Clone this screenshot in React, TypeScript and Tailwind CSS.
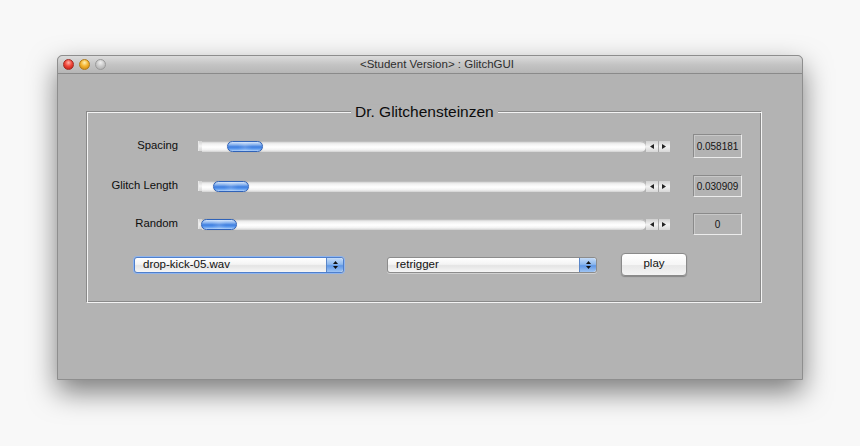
import React from "react";

const font = { fontFamily: '"Liberation Sans", Arial, sans-serif' };

function Slider({ offset }: { offset: number }) {
  return (
    <div className="flex items-center h-[12px] w-[472px]">
      <div className="w-[4px] h-[10px] bg-gradient-to-b from-[#cfcfcf] via-[#f4f4f4] to-[#d8d8d8] border-l border-[#e8e8e8]" />
      <div className="relative flex-1 h-[11px] rounded-r-full rounded-l-[5px] bg-[linear-gradient(#c4c4c4,#f0f0f0_25%,#ffffff_55%,#f2f2f2_80%,#d0d0d0)] shadow-[inset_0_1px_0_#bdbdbd]">
        <div
          className="absolute top-[0px] h-[11px] w-[36px] rounded-full border border-[#2f62b8] bg-[linear-gradient(#d6e6fb,#8ab4ef_30%,#3d7ee0_55%,#5f9cf0_78%,#b3d1f7)] shadow-[0_0_1px_rgba(0,0,0,0.3)]"
          style={{ left: offset }}
        >
          <div className="mx-[10px] h-full bg-[linear-gradient(90deg,transparent,rgba(255,255,255,0.15)_50%,transparent)]" />
        </div>
      </div>
      <div className="flex h-[11px] w-[24px] bg-[linear-gradient(#d0d0d0,#f2f2f2_50%,#d6d6d6)]">
        <div className="flex-1 flex items-center justify-center border-r border-[#a8a8a8]">
          <svg width="4" height="5" viewBox="0 0 4 5"><path d="M4 0 L0 2.5 L4 5 Z" fill="#222" /></svg>
        </div>
        <div className="flex-1 flex items-center justify-center">
          <svg width="4" height="5" viewBox="0 0 4 5"><path d="M0 0 L4 2.5 L0 5 Z" fill="#222" /></svg>
        </div>
      </div>
    </div>
  );
}

function ValueBox({ value, h }: { value: string; h: number }) {
  return (
    <div
      className="w-[49px] flex items-center justify-center border border-t-[#8a8a8a] border-l-[#8a8a8a] border-b-[#ececec] border-r-[#ececec] text-[10px] text-[#151515] shadow-[inset_1px_1px_0_#c8c8c8]"
      style={{ height: h }}
    >
      {value}
    </div>
  );
}

function Row({ label, offset, value, h, className }: { label: string; offset: number; value: string; h: number; className?: string }) {
  return (
    <div className={"flex items-center h-[24px] " + (className || "")}>
      <div className="w-[91px] text-right text-[11.3px] text-[#0e0e0e] leading-none">{label}</div>
      <div className="ml-[20px]">
        <Slider offset={offset} />
      </div>
      <div className="ml-[23px]">
        <ValueBox value={value} h={h} />
      </div>
    </div>
  );
}

function Stepper() {
  return (
    <div className="w-[17px] h-full flex flex-col items-center justify-center gap-[2px] bg-[linear-gradient(#c5dcf8,#8db8ee_45%,#5f97e6_55%,#9fc4f2)] border-l border-[#5a86c8] rounded-r-[3px]">
      <svg width="5" height="3" viewBox="0 0 5 3"><path d="M0 3 L2.5 0 L5 3 Z" fill="#111" /></svg>
      <svg width="5" height="3" viewBox="0 0 5 3"><path d="M0 0 L2.5 3 L5 0 Z" fill="#111" /></svg>
    </div>
  );
}

function Dropdown({ text, focused }: { text: string; focused?: boolean }) {
  return (
    <div
      className={
        "w-[210px] h-[16px] flex items-center rounded-[3px] border bg-[linear-gradient(#ffffff,#f4f4f4_45%,#e4e4e4_55%,#f6f6f6)] " +
        (focused
          ? "border-[#4f7fcc] shadow-[0_0_0_1px_#8fb4ec]"
          : "border-[#8c8c8c] shadow-[0_1px_0_rgba(255,255,255,0.4)]")
      }
    >
      <div className="flex-1 pl-[8px] text-[11.5px] leading-none text-[#111]">{text}</div>
      <Stepper />
    </div>
  );
}

export default function App() {
  return (
    <div className="w-[860px] h-[446px] bg-[#f8f8f8] pt-[55px] pl-[57px] overflow-hidden" style={font}>
      <div className="w-[746px] h-[325px] flex flex-col rounded-t-[5px] bg-[#b3b3b3] border border-[#8e8e8e] shadow-[0_12px_28px_rgba(0,0,0,0.5)]">
        {/* title bar */}
        <div className="relative h-[18px] flex items-center justify-center rounded-t-[5px] bg-[linear-gradient(#dcdcdc,#c4c4c4_50%,#b6b6b6)] border-b border-[#8a8a8a]">
          <div className="absolute left-[5px] top-[3px] flex gap-[5px]">
            <div className="w-[11px] h-[11px] rounded-full border border-[#a12a22] bg-[radial-gradient(circle_at_50%_30%,#ffb3a8_0%,#f0463a_45%,#b5160d_100%)]" />
            <div className="w-[11px] h-[11px] rounded-full border border-[#b07a1a] bg-[radial-gradient(circle_at_50%_30%,#fff0b0_0%,#f5b532_45%,#c7800a_100%)]" />
            <div className="w-[11px] h-[11px] rounded-full border border-[#9a9a9a] bg-[radial-gradient(circle_at_50%_30%,#f0f0f0_0%,#c8c8c8_50%,#a9a9a9_100%)]" />
          </div>
          <div className="pl-[14px] text-[11.5px] text-[#2e2e2e] leading-none">&lt;Student Version&gt; : GlitchGUI</div>
        </div>
        {/* body */}
        <div className="pl-[28px] pt-[37px]">
          <div className="relative w-[676px] h-[192px] border border-t-[#8a8a8a] border-l-[#8a8a8a] border-b-[#f4f4f4] border-r-[#f4f4f4] shadow-[inset_1px_1px_0_#f4f4f4,inset_-1px_-1px_0_#8a8a8a]">
            <div className="absolute left-[264px] top-0 -translate-y-1/2 bg-[#b3b3b3] px-[4px] text-[15.5px] leading-none text-[#0c0c0c] whitespace-nowrap">
              Dr. Glitchensteinzen
            </div>
            <div className="pt-[22px]">
              <Row label="Spacing" offset={25} value="0.058181" h={24} />
              <Row label="Glitch Length" offset={11} value="0.030909" h={22} className="mt-[16px]" />
              <Row label="Random" offset={-1} value="0" h={22} className="mt-[14px]" />
              <div className="flex items-center mt-[17px] h-[23px]">
                <div className="ml-[47px]">
                  <Dropdown text="drop-kick-05.wav" focused />
                </div>
                <div className="ml-[43px]">
                  <Dropdown text="retrigger" />
                </div>
                <button className="ml-[24px] w-[66px] h-[23px] rounded-[4px] border border-[#8a8a8a] bg-[linear-gradient(#ffffff,#f6f6f6_50%,#e8e8e8_55%,#f4f4f4)] text-[11.5px] text-[#111] shadow-[0_1px_1px_rgba(0,0,0,0.25)] leading-none pb-[2px]">
                  play
                </button>
              </div>
            </div>
          </div>
        </div>
      </div>
    </div>
  );
}
